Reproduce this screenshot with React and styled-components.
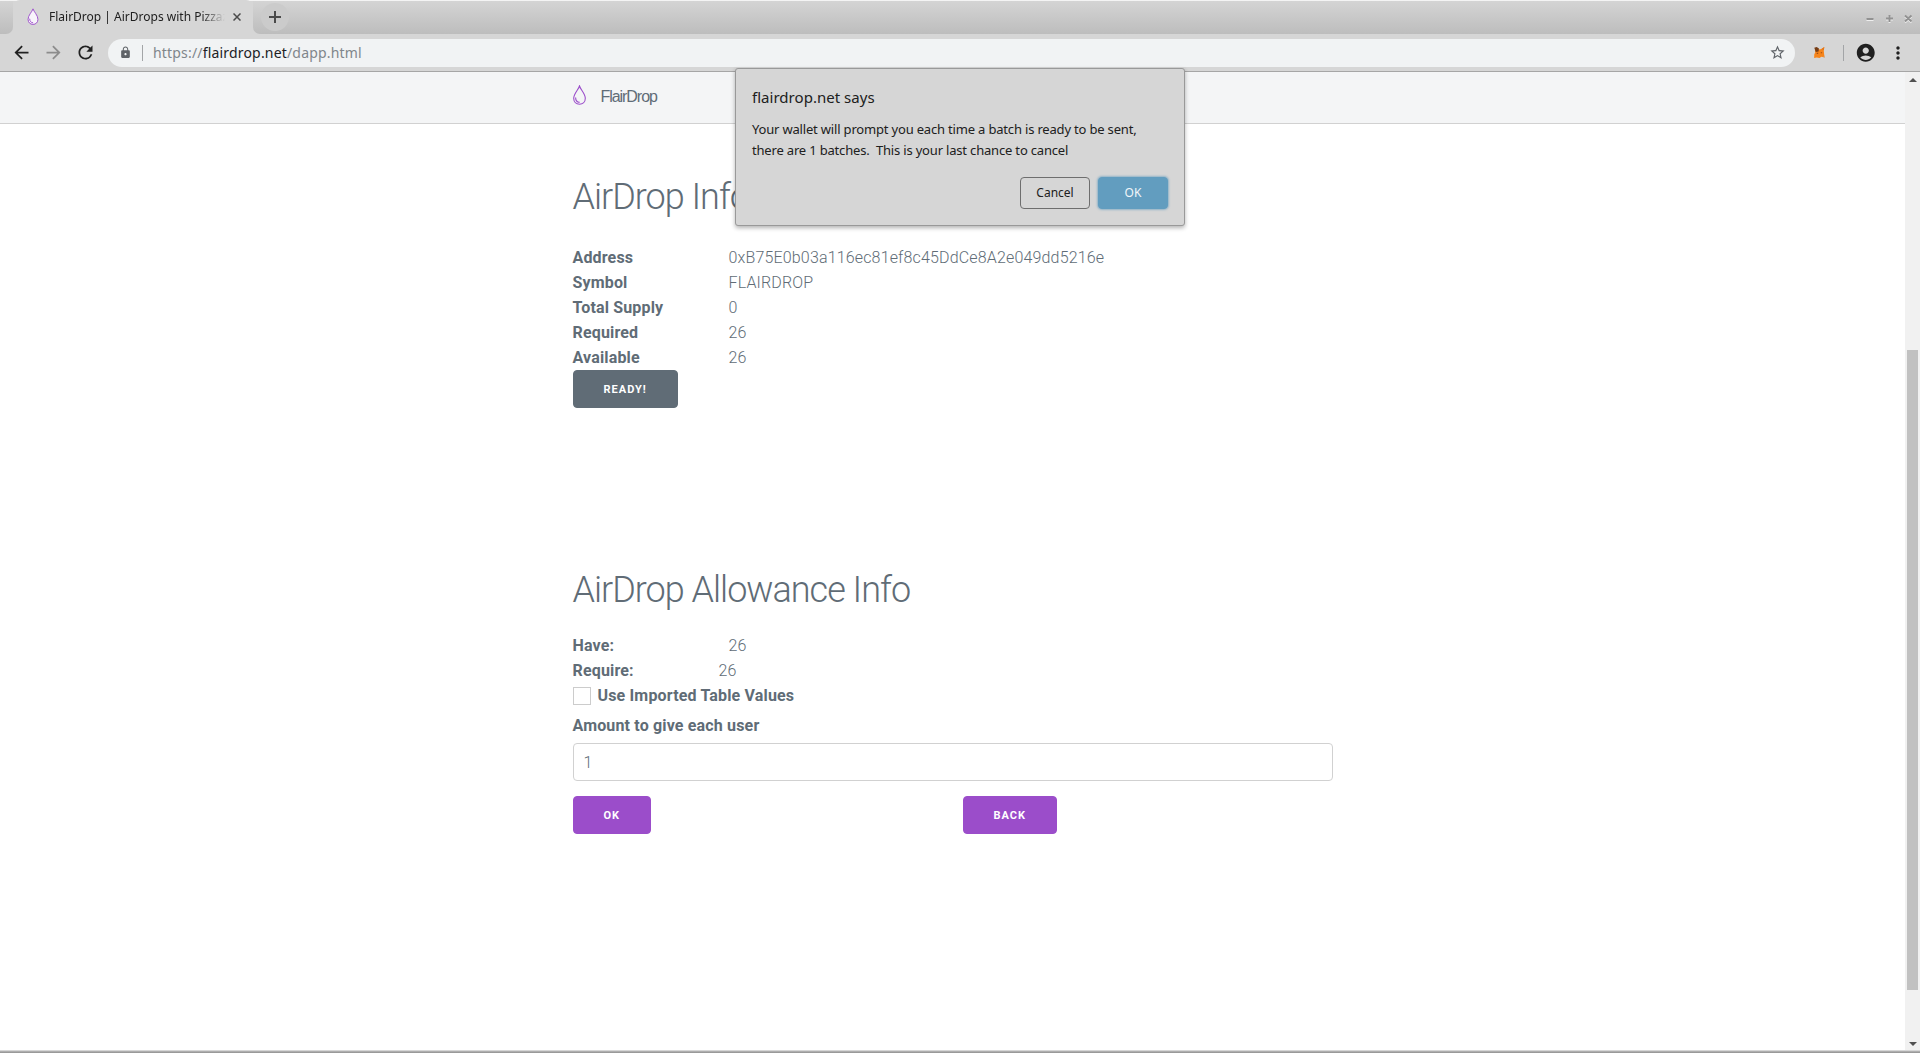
import React, { useState } from 'react'
import styled, { createGlobalStyle } from 'styled-components'
import { MdArrowBack, MdArrowForward, MdRefresh, MdLock, MdStarBorder, MdAccountCircle, MdMoreVert } from 'react-icons/md'

const tokenInfo = [
    { label: 'Address', value: '0xB75E0b03a116ec81ef8c45DdCe8A2e049dd5216e' },
    { label: 'Symbol', value: 'FLAIRDROP' },
    { label: 'Total Supply', value: '0' },
    { label: 'Required', value: '26' },
    { label: 'Available', value: '26' }
]

const DropLogo = ({ width, height, fill = 'none' }) => (
    <svg width={width} height={height} viewBox='0 0 13 20' fill='none' stroke='#9b4dca'>
        <path d='M6.5 1 C5.4 4.6 0.7 8.6 0.7 13.3 C0.7 17 3.2 19.3 6.5 19.3 C9.8 19.3 12.3 17 12.3 13.3 C12.3 8.6 7.6 4.6 6.5 1 Z' fill={fill} strokeWidth='1.1' />
        <path d='M2.6 12.6 C2.6 15.6 4.2 17.3 6.6 17.4' strokeWidth='1.1' />
    </svg>
)

const Fox = () => (
    <svg width='13' height='13' viewBox='0 0 14 14'>
        <path d='M2 3 L5 4 L9 3.2 L12.2 1 L11.6 5 L12 9 L12.6 12.4 L9 11.6 L7 12.8 L4 12.4 L1.2 12.8 L1.4 9 L2.4 7 Z' fill='#f6851b' />
        <path d='M1.4 2 L4 1 L6.4 2.6 L6 5.8 L3 6.4 Z' fill='#763d16' />
        <path d='M9 3.2 L12.2 1 L11.6 4.6 Z' fill='#e2761b' />
        <path d='M4 7.4 h1.6 v1.2 h-1.6 z M8.4 6.6 h1.4 v1.2 h-1.4 z' fill='#a34d12' />
        <path d='M11 11.4 L12.8 11.6 L12.4 13 Z' fill='#c0ad9e' />
    </svg>
)

const InfoRow = ({ label, value, offset }) => (
    <Row>
        <Label $width={offset}>{label}</Label>
        <span>{value}</span>
    </Row>
)

const App = () => {
    const [ amount, setAmount ] = useState('1')
    const [ imported, setImported ] = useState(false)

    return (
        <Window>
            <GlobalStyle />
            <TabStrip>
                <StripEdge />
                <Tab>
                    <DropLogo width={12} height={17} fill='#f8f4fb' />
                    <TabTitle>FlairDrop | AirDrops with Pizzaz</TabTitle>
                    <svg width='8' height='8' viewBox='0 0 8 8' stroke='#4a4a4a' strokeWidth='1.5'>
                        <path d='M0.5 0.5 L7.5 7.5 M7.5 0.5 L0.5 7.5' />
                    </svg>
                </Tab>
                <StripRest>
                    <NewTab>
                        <svg width='12' height='12' viewBox='0 0 12 12' stroke='#4a4a4a' strokeWidth='2'>
                            <path d='M6 0 V12 M0 6 H12' />
                        </svg>
                    </NewTab>
                    <WindowControls>
                        <path d='M0.5 11 H7.5 M20 10.5 H27 M23.5 7 V14 M39 7.5 L45.5 13.5 M45.5 7.5 L39 13.5' stroke='#eeeeee' />
                        <path d='M0.5 10 H7.5 M20 9.5 H27 M23.5 6 V13 M39 6.5 L45.5 12.5 M45.5 6.5 L39 12.5' stroke='#929292' />
                    </WindowControls>
                </StripRest>
            </TabStrip>

            <Toolbar>
                <NavIcons>
                    <MdArrowBack size={21} color='#202020' />
                    <MdArrowForward size={21} color='#8c8c8c' />
                    <MdRefresh size={21} color='#202020' />
                </NavIcons>
                <Omnibox>
                    <MdLock size={13} color='#5f6368' />
                    <Divider $height={16} />
                    <Url>https://<b>flairdrop.net</b>/dapp.html</Url>
                    <MdStarBorder size={17} color='#5f6368' />
                </Omnibox>
                <Extensions>
                    <Fox />
                    <Divider $height={16} />
                    <MdAccountCircle size={21.5} color='#202020' />
                    <MdMoreVert size={20} color='#202020' />
                </Extensions>
            </Toolbar>

            <Viewport>
                <Page>
                    <NavBar>
                        <Container>
                            <Brand>
                                <DropLogo width={13} height={20} />
                                <span>FlairDrop</span>
                            </Brand>
                        </Container>
                    </NavBar>
                    <Container>
                        <Section $top={51}>
                            <Heading $gap={25}>AirDrop Info</Heading>
                            {tokenInfo.map(info => <InfoRow key={info.label} {...info} offset={156} />)}
                            <Button $color='#606c76'>Ready!</Button>
                        </Section>
                        <Section $top={160}>
                            <Heading $gap={20}>AirDrop Allowance Info</Heading>
                            <InfoRow label='Have:' value='26' offset={156} />
                            <InfoRow label='Require:' value='26' offset={146} />
                            <CheckLabel>
                                <Checkbox type='checkbox' checked={imported} onChange={e => setImported(e.target.checked)} />
                                Use Imported Table Values
                            </CheckLabel>
                            <FieldLabel htmlFor='amount'>Amount to give each user</FieldLabel>
                            <Field id='amount' value={amount} onChange={e => setAmount(e.target.value)} />
                            <Actions>
                                <Button>OK</Button>
                                <Button>Back</Button>
                            </Actions>
                        </Section>
                    </Container>
                </Page>
                <ScrollBar>
                    <svg width='8' height='4' viewBox='0 0 8 4'><path d='M0 4 L4 0 L8 4 Z' fill='#505050' /></svg>
                    <Thumb />
                    <svg width='8' height='4' viewBox='0 0 8 4'><path d='M0 0 L4 4 L8 0 Z' fill='#505050' /></svg>
                </ScrollBar>
            </Viewport>
            <WindowEdge />

            <Dialog>
                <DialogTitle>flairdrop.net says</DialogTitle>
                <DialogText>{'Your wallet will prompt you each time a batch is ready to be sent,\nthere are 1 batches.  This is your last chance to cancel'}</DialogText>
                <DialogActions>
                    <DialogButton>Cancel</DialogButton>
                    <DialogButton $primary>OK</DialogButton>
                </DialogActions>
            </Dialog>
        </Window>
    )
}

export default App

const GlobalStyle = createGlobalStyle`
    * {
        box-sizing: border-box;
    }

    body {
        margin: 0;
        overflow: hidden;
    }
`

const Window = styled.div`
    position: relative;
    display: flex;
    flex-direction: column;
    width: 1920px;
    height: 1053px;
    background: #d6d6d6;
    font-family: 'Noto Sans', sans-serif;
`

const TabStrip = styled.div`
    display: flex;
    height: 34px;
    flex: none;
    border-top: 1px solid #f4f4f4;
`

const StripEdge = styled.div`
    width: 13px;
    background: linear-gradient(#d4d4d4, #bdbdbd);
    border-bottom-right-radius: 7px;
`

const Tab = styled.div`
    display: flex;
    align-items: center;
    width: 240px;
    padding: 0 12px 1px 14px;
    margin-top: -1px;
    border-radius: 7px 7px 0 0;
    background: #d6d6d6;
`

const TabTitle = styled.span`
    flex: 1;
    margin: 0 2px 0 10px;
    white-space: nowrap;
    font-size: 12px;
    color: #202020;
    mask-image: linear-gradient(to right, #000 152px, transparent 176px);
`

const StripRest = styled.div`
    display: flex;
    flex: 1;
    align-items: center;
    justify-content: space-between;
    padding: 0 6px 0 8px;
    background: linear-gradient(#d4d4d4, #bdbdbd);
    border-bottom-left-radius: 7px;
`

const NewTab = styled.div`
    display: flex;
    align-items: center;
    justify-content: center;
    width: 28px;
    height: 28px;
    margin-bottom: 1px;
    border-radius: 50%;
    background: #cbcbcb;
`

const WindowControls = styled.svg.attrs({ viewBox: '0 0 48 18' })`
    width: 48px;
    height: 18px;
    stroke-width: 1.9;
`

const Toolbar = styled.div`
    display: flex;
    align-items: center;
    height: 38px;
    flex: none;
    border-bottom: 1px solid #a6a6a6;
`

const NavIcons = styled.div`
    display: flex;
    justify-content: space-between;
    width: 108px;
    padding: 0 12px 0 11px;
`

const Divider = styled.div`
    width: 1px;
    height: ${pr => pr.$height}px;
    background: #a3a5a7;
`

const Omnibox = styled.div`
    display: flex;
    flex: 1;
    align-items: center;
    height: 28px;
    padding: 0 9.5px 0 11px;
    border-radius: 14px;
    background: #f1f3f4;

    ${Divider} {
        margin-left: 10px;
    }
`

const Url = styled.span`
    flex: 1;
    margin-left: 10px;
    font-size: 14px;
    letter-spacing: 0.18px;
    color: #80868b;

    b {
        font-weight: 400;
        color: #202124;
    }
`

const Extensions = styled.div`
    display: flex;
    align-items: center;
    width: 125px;
    padding-left: 17.5px;

    ${Divider} {
        margin: 0 11px 0 17.5px;
    }

    svg:last-child {
        margin-left: 11.5px;
    }
`

const Viewport = styled.div`
    display: flex;
    flex: 1;
    min-height: 0;
`

const Page = styled.div`
    flex: 1;
    background: #fff;
    font-family: Roboto, sans-serif;
    font-size: 16px;
    font-weight: 300;
    line-height: 25px;
    letter-spacing: 0.16px;
    color: #606c76;
`

const NavBar = styled.nav`
    height: 52px;
    background: #f4f5f6;
    border-bottom: 1px solid #d1d1d1;
`

const Container = styled.div`
    width: 760px;
    margin: 0 auto;
`

const Brand = styled.div`
    display: flex;
    align-items: center;
    gap: 15px;
    height: 49px;
    font-family: 'Liberation Sans', sans-serif;
    font-weight: 400;
    letter-spacing: -1.05px;

    svg {
        margin-bottom: 3px;
    }
`

const Section = styled.section`
    padding-top: ${pr => pr.$top}px;
`

const Heading = styled.h2`
    margin: 0 0 ${pr => pr.$gap}px;
    font-size: 36px;
    font-weight: 300;
    line-height: 45px;
    letter-spacing: -1px;
`

const Row = styled.div`
    display: flex;
    height: 25px;
`

const Label = styled.span`
    width: ${pr => pr.$width}px;
    font-weight: 700;
`

const Button = styled.button`
    display: block;
    height: 38px;
    padding: 0 30px;
    border: 1px solid ${pr => pr.$color || '#9b4dca'};
    border-radius: 4px;
    background: ${pr => pr.$color || '#9b4dca'};
    color: #fff;
    font-family: Roboto, sans-serif;
    font-size: 11px;
    font-weight: 700;
    letter-spacing: 1px;
    text-transform: uppercase;
`

const CheckLabel = styled.label`
    display: flex;
    align-items: center;
    gap: 7px;
    height: 25px;
    font-weight: 700;
`

const Checkbox = styled.input`
    appearance: none;
    width: 18px;
    height: 18px;
    margin: 1px 0 0;
    border: 1px solid #cccccc;
    background: #fff;
`

const FieldLabel = styled.label`
    display: block;
    padding-top: 5px;
    font-weight: 700;
`

const Field = styled.input`
    display: block;
    width: 100%;
    height: 38px;
    margin: 5px 0 15px;
    padding: 6px 10px;
    border: 1px solid #d1d1d1;
    border-radius: 4px;
    color: #606c76;
    font-family: Roboto, sans-serif;
    font-size: 16px;
    font-weight: 300;
`

const Actions = styled.div`
    display: grid;
    grid-template-columns: 390px 1fr;
    justify-items: start;
`

const ScrollBar = styled.div`
    display: flex;
    flex-direction: column;
    align-items: center;
    width: 15px;
    padding: 6px 0 4px;
    background: #f1f1f1;
`

const Thumb = styled.div`
    width: 11px;
    height: 640px;
    margin: 268px 0 auto;
    background: #c1c1c1;
`

const WindowEdge = styled.div`
    height: 3px;
    flex: none;
    background: linear-gradient(#d6d6d6 1px, #b8b8b8 1px, #8f8f8f);
`

const Dialog = styled.div`
    position: absolute;
    top: 68px;
    left: 735px;
    width: 450px;
    height: 158px;
    padding: 16px 16px 16px 16px;
    border: 1px solid #999;
    border-radius: 3px;
    background: #d6d6d6;
    box-shadow: 0 2px 4px rgba( 0, 0, 0, 0.3 );
    color: #202020;
`

const DialogTitle = styled.div`
    font-size: 15px;
    line-height: 24px;
    letter-spacing: 0.03px;
`

const DialogText = styled.p`
    margin: 10px 0 0;
    font-size: 13px;
    line-height: 21px;
    letter-spacing: -0.18px;
    white-space: pre;
`

const DialogActions = styled.div`
    display: flex;
    justify-content: flex-end;
    gap: 8px;
    margin-top: 16px;
`

const DialogButton = styled.button`
    width: 70px;
    height: 32px;
    padding: 0 0 2px;
    border: 1px solid ${pr => pr.$primary ? '#629dbf' : '#6e6e6e'};
    border-radius: 4px;
    background: ${pr => pr.$primary ? '#629dbf' : 'transparent'};
    box-shadow: ${pr => pr.$primary ? '0 0 2px 1px rgba( 98, 157, 191, 0.6 )' : 'none'};
    color: ${pr => pr.$primary ? '#f1f6f9' : '#202020'};
    font-family: 'Noto Sans', sans-serif;
    font-size: 12px;
`
